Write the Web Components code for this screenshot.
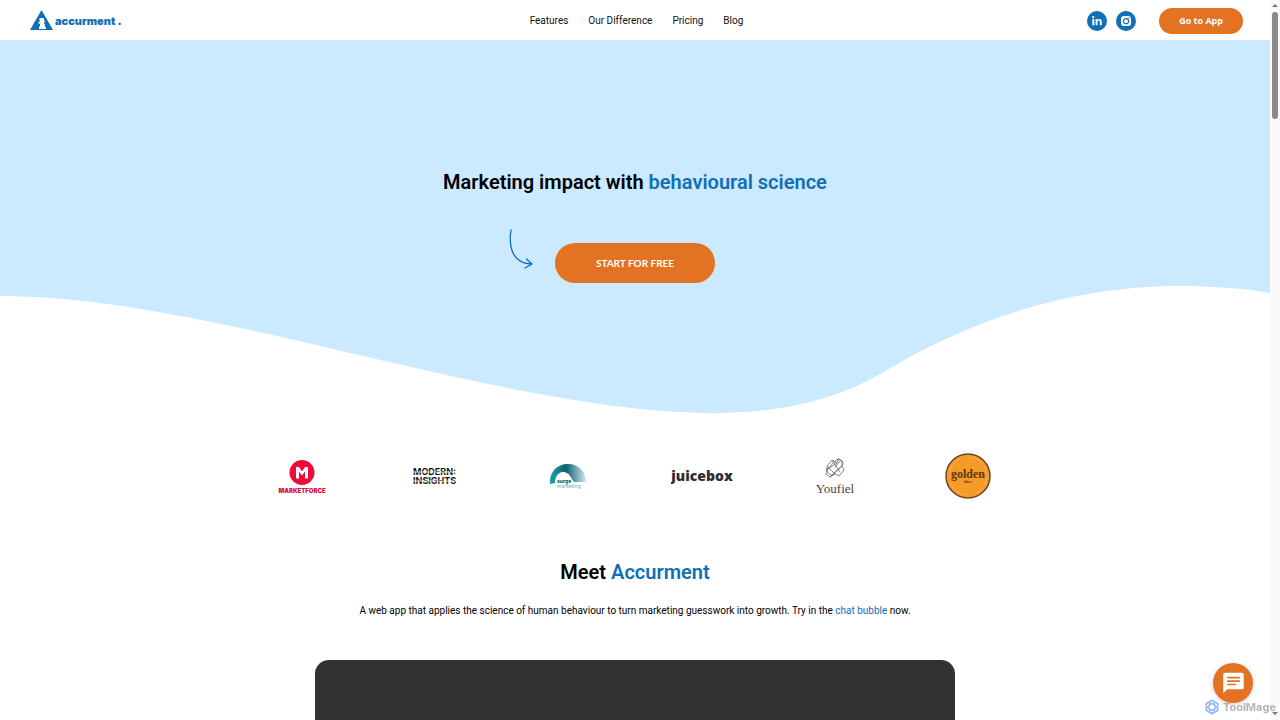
<!DOCTYPE html>
<html lang="en">
<head>
<meta charset="utf-8">
<meta name="viewport" content="width=device-width, initial-scale=1">
<title>Accurment</title>
<style>
:root{--blue:#0f6fb7;--orange:#e37222;--sky:#cbe9ff}
html,body{margin:0;height:100%;overflow:hidden}
body{font-family:Roboto,"Liberation Sans",sans-serif;color:#000;background:#fff}
</style>
</head>
<body>
<accurment-page></accurment-page>
<script>
const define = (name, html) => customElements.define(name, class extends HTMLElement {
  constructor() {
    super();
    const t = document.createElement('template');
    t.innerHTML = html;
    this.attachShadow({mode: 'open'}).append(t.content.cloneNode(true));
  }
});

define('brand-logo', `
<style>
:host{display:block}
a{display:flex;align-items:center;gap:2px;color:var(--blue);text-decoration:none;font:900 11px/20px Inter,sans-serif}
svg{display:block}
</style>
<a href="#home"><svg width="23" height="22" viewBox="0 0 23 22" aria-hidden="true"><path d="M11.5 0 23 20H0Z" fill="#0f6fb7"/><path d="M11 8h3v2l1 1-1 2 1 2v2h1v2H9v-2l1-1v-2l-2-1 2-2-1-2Z" fill="#fff"/></svg><span>accurment .</span></a>`);

define('site-nav', `
<style>
:host{display:block}
nav{display:flex;gap:20px;font:400 10px/20px Roboto,sans-serif}
a{color:#111;text-decoration:none}
</style>
<nav><a href="#features">Features</a><a href="#difference">Our Difference</a><a href="#pricing">Pricing</a><a href="#blog">Blog</a></nav>`);

define('social-links', `
<style>
:host{display:flex;gap:9px}
a,svg{display:block}
</style>
<a href="#linkedin" aria-label="LinkedIn"><svg width="20" height="20" viewBox="0 0 21 21"><circle cx="10.5" cy="10.5" r="10.5" fill="#0f6fb7"/><path d="M5.6 8.5h2V15h-2ZM9 8.5h1.9v.9c.5-.7 1.1-1.1 2.1-1.1 1.8 0 2.5 1.1 2.5 3V15h-2v-3.4c0-.9-.3-1.5-1.1-1.5-.9 0-1.4.6-1.4 1.6V15H9Z" fill="#fff"/><circle cx="6.6" cy="6.5" r="1.2" fill="#fff"/></svg></a>
<a href="#instagram" aria-label="Instagram"><svg width="20" height="20" viewBox="0 0 21 21"><circle cx="10.5" cy="10.5" r="10.5" fill="#0f6fb7"/><rect x="5.3" y="5.3" width="10.4" height="10.4" rx="2.8" fill="#fff"/><circle cx="10.5" cy="10.7" r="2.7" fill="none" stroke="#0f6fb7" stroke-width="1.2"/><circle cx="13.7" cy="7.4" r=".8" fill="#0f6fb7"/></svg></a>`);

define('pill-button', `
<style>
:host{display:block}
button{display:block;border:0;border-radius:20px;background:var(--orange);color:#fff;padding:0 20px;font:700 9px/26px "Open Sans",sans-serif;cursor:pointer}
:host([size=large]) button{font:700 10px/40px Lato,sans-serif;padding:0;width:160px}
</style>
<button type="button"><slot></slot></button>`);

define('site-header', `
<style>
:host{display:grid;grid-template-columns:1fr auto 1fr;align-items:center;box-sizing:border-box;height:40px;padding:2px 27px 0 30px;background:#fff}
.end{display:flex;align-items:center;justify-content:flex-end;gap:23px}
</style>
<brand-logo></brand-logo><site-nav></site-nav>
<div class="end"><social-links></social-links><pill-button>Go to App</pill-button></div>`);

define('section-title', `
<style>
:host{display:block;text-align:center}
h2{margin:0;font:600 20px/28px Roboto,sans-serif}
::slotted(span){color:var(--blue)}
</style>
<h2><slot></slot></h2>`);

define('hero-banner', `
<style>
:host{display:block}
.top{background:var(--sky);padding:128px 24px 0}
.action{display:grid;grid-template-columns:1fr auto 1fr;align-items:end;gap:21px;padding-top:33px}
.arrow{justify-self:end}
svg{display:block}
.wave{width:100%;height:131px}
</style>
<div class="top">
<section-title>Marketing impact with <span>behavioural science</span></section-title>
<div class="action"><svg class="arrow" width="26" height="54" viewBox="0 0 26 54" fill="none" stroke="#0f6fb7" stroke-width="1.3" stroke-linecap="round" stroke-linejoin="round" aria-hidden="true"><path d="M3 1C0 20 6 35 24 35M18.5 30l5.5 5-7 4"/></svg>
<pill-button size="large">START FOR FREE</pill-button></div>
</div>
<svg class="wave" viewBox="0 0 1270 131" preserveAspectRatio="none" aria-hidden="true"><path d="M0 0H1270V10C1240 5 1210 3 1180 3C1060 3 960 43 880 91C832 119 775 130 715 130C502 130 213 13 0 13Z" fill="#cbe9ff"/></svg>`);

define('client-logos', `
<style>
:host{display:block;max-width:800px;margin:0 auto}
ul{display:grid;grid-template-columns:repeat(6,1fr);align-items:center;justify-items:center;margin:0;padding:0;list-style:none;height:46px}
svg{display:block}
</style>
<ul>
<li><svg width="50" height="34" viewBox="0 0 50 34"><circle cx="25" cy="13.5" r="12.5" fill="#f00a37"/><path d="M19 19.500V8h3l3 4.500L28 8h3v11.500h-3v-7l-3 4-3-4v7Z" fill="#fff"/><text x="25" y="34" text-anchor="middle" font-family="Inter" font-weight="900" font-size="6" fill="#e00a34">MARKETFORCE</text></svg></li>
<li><svg width="50" height="20" viewBox="0 0 50 20" font-family="Inter" font-weight="700" font-size="9" fill="#161616"><text x="3" y="9">MODERN:</text><text x="3" y="18">INSIGHTS</text><path d="M2 6h46M2 15h46" stroke="#fff" stroke-width=".8"/></svg></li>
<li><svg width="38" height="26" viewBox="0 0 38 26"><defs><linearGradient id="g"><stop stop-color="#20a3aa"/><stop offset=".45" stop-color="#0d6370"/><stop offset="1" stop-color="#d3e8ea"/></linearGradient></defs><path d="M1 21C0 9 8 1 19 1s18 8 18 18H25c-3-3-4-10-11-10C9 9 6 14 6 20Z" fill="url(#g)"/><text x="8" y="20" font-family="Inter" font-weight="800" font-size="5" fill="#0d6370">surge</text><text x="8" y="25" font-family="Inter" font-size="5" fill="#63aeb6">marketing</text></svg></li>
<li><svg width="62" height="20" viewBox="0 0 62 20"><text x="31" y="15" text-anchor="middle" font-family="Open Sans" font-weight="800" font-size="14" fill="#2d2d2d">juicebox</text></svg></li>
<li><svg width="42" height="38" viewBox="0 0 42 38"><g fill="none" stroke="#555" stroke-width=".7"><rect x="12" y="6" width="18" height="8" rx="3" transform="rotate(-45 21 10)"/><path d="m13 9 5-6 5 3 1-4 4 2v5l2 4-5 6-4-2-5 3-4-3 1-4Zm5-6 8 12M13 9l8 8m-9-4 11-7m-7 14 12-11M21 10l5-6"/></g><text x="21" y="36" text-anchor="middle" font-family="Liberation Serif" font-size="13" fill="#444">Youfiel</text></svg></li>
<li><svg width="46" height="46" viewBox="0 0 46 46"><circle cx="23" cy="23" r="22" fill="#f49c27" stroke="#704324" stroke-width="1.5"/><circle cx="23" cy="23" r="19" fill="none" stroke="#f9bd68" stroke-width=".6" stroke-dasharray="22 8"/><text x="23" y="25" text-anchor="middle" font-family="Liberation Serif" font-weight="700" font-size="12" fill="#633317">golden</text><text x="23" y="30" text-anchor="middle" font-family="Liberation Serif" font-weight="700" font-size="4" fill="#633317">bites</text></svg></li>
</ul>`);

define('meet-section', `
<style>
:host{display:block;padding:0 24px}
p{margin:15px 0 0;text-align:center;font:400 10px/20px Roboto,sans-serif}
a{color:var(--blue);text-decoration:none}
.video{max-width:640px;height:360px;margin:39px auto 0;border-radius:14px;background:#323232}
</style>
<section-title>Meet <span>Accurment</span></section-title>
<p>A web app that applies the science of human behaviour to turn marketing guesswork into growth. Try in the <a href="#chat">chat bubble</a> now.</p>
<div class="video"></div>`);

define('page-scrollbar', `
<style>
:host{display:flex;flex-direction:column;align-items:center;background:#fafafa}
svg{display:block;flex:none}
i{width:6px;height:107px;border-radius:3px;background:#8a8a8a;margin-bottom:auto}
</style>
<svg width="10" height="12"><path d="M2 7l3-3 3 3Z" fill="#777"/></svg><i></i><svg width="10" height="12"><path d="M2 4l3 3 3-3Z" fill="#777"/></svg>`);

define('chat-bubble', `
<style>
:host{position:fixed;right:27px;bottom:17px}
button{display:block;width:40px;height:40px;padding:0;border:0;border-radius:50%;background:var(--orange);box-shadow:0 1px 5px #0003;cursor:pointer}
svg{display:block}
</style>
<button type="button" aria-label="Open chat"><svg width="40" height="40" viewBox="0 0 41 41"><path d="M12.5 10h17a2 2 0 0 1 2 2v13a2 2 0 0 1-2 2H14.5l-4 4V12a2 2 0 0 1 2-2Z" fill="#fff"/><path d="M14.5 15h13M14.5 18.5h13M14.5 22h9" stroke="#e37222" stroke-width="1.7"/></svg></button>`);

define('tool-mark', `
<style>
:host{position:fixed;right:4px;bottom:4px;display:flex;align-items:center;gap:3px;font:700 11px/18px Inter,sans-serif;color:#999b;pointer-events:none}
svg{display:block}
</style>
<svg width="16" height="16" viewBox="-8 -8 16 16" fill="none" stroke="#8cb6f4" stroke-width="1.1" aria-hidden="true"><path d="M0-7 6-3.5v7L0 7-6 3.5v-7Z"/><ellipse rx="3" ry="6"/><ellipse rx="3" ry="6" transform="rotate(60)"/><ellipse rx="3" ry="6" transform="rotate(120)"/></svg><span>ToolMage</span>`);

define('accurment-page', `
<style>
:host{display:grid;grid-template-columns:minmax(0,1fr) 10px;height:100vh;overflow:hidden}
main{overflow:hidden}
client-logos{margin-top:39px}
meet-section{margin-top:59px}
</style>
<main><site-header></site-header><hero-banner></hero-banner><client-logos></client-logos><meet-section></meet-section></main>
<page-scrollbar></page-scrollbar><chat-bubble></chat-bubble><tool-mark></tool-mark>`);
</script>
</body>
</html>
